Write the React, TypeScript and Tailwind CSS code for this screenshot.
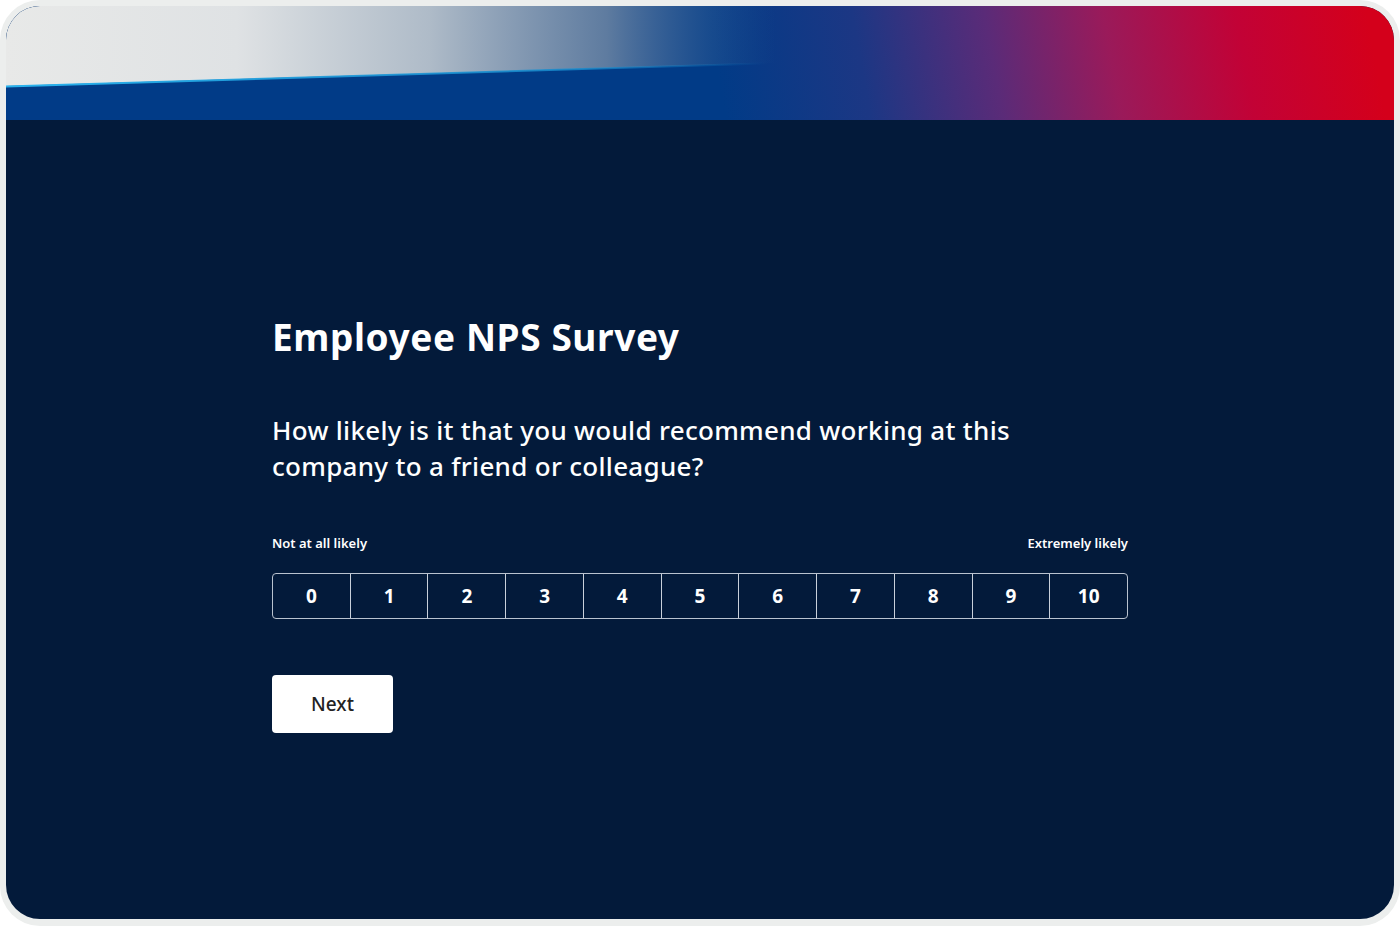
import React from "react";

const font = { fontFamily: '"Noto Sans", "Open Sans", sans-serif' };

function HeaderArt() {
  return (
    <svg width="1388" height="114" viewBox="0 0 1388 114" className="block" preserveAspectRatio="none">
      <defs>
        <linearGradient id="base" gradientUnits="userSpaceOnUse" x1="720" y1="114" x2="1360" y2="0">
          <stop offset="0" stopColor="#013b87" />
          <stop offset="0.22" stopColor="#1c3784" />
          <stop offset="0.42" stopColor="#5a2b78" />
          <stop offset="0.6" stopColor="#9a1a5a" />
          <stop offset="0.8" stopColor="#c20236" />
          <stop offset="1" stopColor="#d4001b" />
        </linearGradient>
        <linearGradient id="mist" gradientUnits="userSpaceOnUse" x1="0" y1="0" x2="770" y2="0">
          <stop offset="0" stopColor="#e8e9e8" />
          <stop offset="0.3" stopColor="#dfe2e4" />
          <stop offset="0.55" stopColor="#b4bfca" stopOpacity="0.97" />
          <stop offset="0.78" stopColor="#6f87a4" stopOpacity="0.85" />
          <stop offset="1" stopColor="#2d5a94" stopOpacity="0" />
        </linearGradient>
        <linearGradient id="edge" gradientUnits="userSpaceOnUse" x1="0" y1="0" x2="760" y2="0">
          <stop offset="0" stopColor="#2ab4ee" />
          <stop offset="0.75" stopColor="#1a8fd0" stopOpacity="0.8" />
          <stop offset="1" stopColor="#1a8fd0" stopOpacity="0" />
        </linearGradient>
      </defs>
      <rect x="0" y="0" width="1388" height="114" fill="url(#base)" />
      <polygon points="0,0 770,0 770,57 0,80" fill="url(#mist)" />
      <line x1="0" y1="80.5" x2="760" y2="57.5" stroke="url(#edge)" strokeWidth="2" />
    </svg>
  );
}

export default function App() {
  const scores = Array.from({ length: 11 }, (_, i) => i);
  return (
    <div className="w-[1400px] h-[926px] bg-white" style={font}>
      <div className="w-full h-full rounded-[40px] bg-[#eceeed] p-[6px] pb-[7px]">
        <div className="w-full h-full rounded-[34px] overflow-hidden bg-[#031a3a] flex flex-col">
          <HeaderArt />
          <div className="pl-[266px] pt-[195px] w-[1122px]">
            <h1 className="text-white text-[37px] leading-[44px] font-bold tracking-[0.6px]">Employee NPS Survey</h1>
            <p className="mt-[53px] text-white text-[26px] leading-[36px] font-medium tracking-[0.3px] w-[780px]">
              How likely is it that you would recommend working at this company to a friend or colleague?
            </p>
            <div className="mt-[51px] flex justify-between text-white text-[13px] leading-[16px] font-semibold">
              <span>Not at all likely</span>
              <span>Extremely likely</span>
            </div>
            <div className="mt-[22px] h-[46px] w-[856px] flex rounded-[4px] border border-[#b9c2cf] overflow-hidden">
              {scores.map((n) => (
                <div
                  key={n}
                  className={`flex-1 flex items-center justify-center text-white text-[19px] font-bold ${n > 0 ? "border-l border-[#c9d0da]" : ""}`}
                >
                  {n}
                </div>
              ))}
            </div>
            <button className="mt-[56px] w-[121px] h-[58px] rounded-[4px] bg-white text-[#222222] text-[19px] font-medium">
              Next
            </button>
          </div>
        </div>
      </div>
    </div>
  );
}
